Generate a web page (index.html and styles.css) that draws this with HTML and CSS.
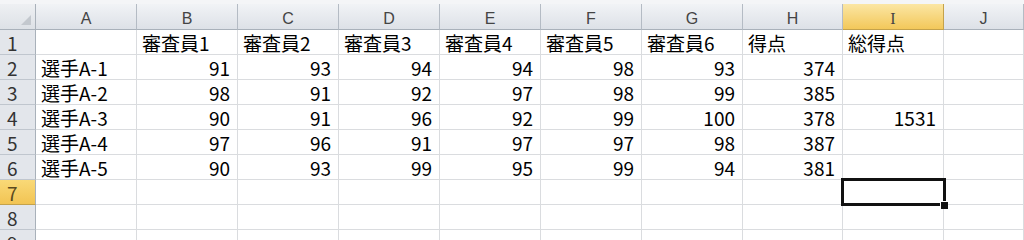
FILE: index.html
```html
<!DOCTYPE html>
<html lang="ja">
<head>
<meta charset="utf-8">
<title>Sheet</title>
<link rel="stylesheet" href="styles.css">
</head>
<body>
<div class="strip"></div>
<div class="sheet">
  <div class="corner"><span class="tri"></span></div>
  <div class="ch">A</div><div class="ch">B</div><div class="ch">C</div><div class="ch">D</div><div class="ch">E</div><div class="ch">F</div><div class="ch">G</div><div class="ch">H</div><div class="ch sel">I</div><div class="ch">J</div>

  <div class="rh">1</div>
  <div class="c"></div><div class="c">審査員1</div><div class="c">審査員2</div><div class="c">審査員3</div><div class="c">審査員4</div><div class="c">審査員5</div><div class="c">審査員6</div><div class="c">得点</div><div class="c">総得点</div><div class="c"></div>

  <div class="rh">2</div>
  <div class="c">選手A-1</div><div class="c n">91</div><div class="c n">93</div><div class="c n">94</div><div class="c n">94</div><div class="c n">98</div><div class="c n">93</div><div class="c n">374</div><div class="c"></div><div class="c"></div>

  <div class="rh">3</div>
  <div class="c">選手A-2</div><div class="c n">98</div><div class="c n">91</div><div class="c n">92</div><div class="c n">97</div><div class="c n">98</div><div class="c n">99</div><div class="c n">385</div><div class="c"></div><div class="c"></div>

  <div class="rh">4</div>
  <div class="c">選手A-3</div><div class="c n">90</div><div class="c n">91</div><div class="c n">96</div><div class="c n">92</div><div class="c n">99</div><div class="c n">100</div><div class="c n">378</div><div class="c n">1531</div><div class="c"></div>

  <div class="rh">5</div>
  <div class="c">選手A-4</div><div class="c n">97</div><div class="c n">96</div><div class="c n">91</div><div class="c n">97</div><div class="c n">97</div><div class="c n">98</div><div class="c n">387</div><div class="c"></div><div class="c"></div>

  <div class="rh">6</div>
  <div class="c">選手A-5</div><div class="c n">90</div><div class="c n">93</div><div class="c n">99</div><div class="c n">95</div><div class="c n">99</div><div class="c n">94</div><div class="c n">381</div><div class="c"></div><div class="c"></div>

  <div class="rh sel">7</div>
  <div class="c"></div><div class="c"></div><div class="c"></div><div class="c"></div><div class="c"></div><div class="c"></div><div class="c"></div><div class="c"></div><div class="c active"></div><div class="c"></div>

  <div class="rh">8</div>
  <div class="c"></div><div class="c"></div><div class="c"></div><div class="c"></div><div class="c"></div><div class="c"></div><div class="c"></div><div class="c"></div><div class="c"></div><div class="c"></div>

  <div class="rh">9</div>
  <div class="c"></div><div class="c"></div><div class="c"></div><div class="c"></div><div class="c"></div><div class="c"></div><div class="c"></div><div class="c"></div><div class="c"></div><div class="c"></div>
</div>
</body>
</html>
```

FILE: styles.css
```css
html, body {
  margin: 0;
  padding: 0;
  background: #ffffff;
  overflow: hidden;
  width: 1024px;
  height: 240px;
}

.strip {
  height: 4px;
  background: #f4f5f7;
}

.sheet {
  display: grid;
  grid-template-columns: 36px 101px 101px 101px 101px 101px 101px 101px 100px 101px 1fr;
  grid-template-rows: 26px repeat(9, 25px);
  font-family: "Noto Sans CJK JP", "Noto Sans", sans-serif;
  color: #000;
}

.corner {
  position: relative;
  background: linear-gradient(#eef0f3, #dde1e6);
  border-right: 1px solid #a9b1ba;
  border-bottom: 1px solid #a9b1ba;
}

.tri {
  position: absolute;
  right: 4px;
  bottom: 4px;
  width: 0;
  height: 0;
  border-left: 10px solid transparent;
  border-bottom: 10px solid #c3c8ce;
}

.ch {
  background: linear-gradient(#f1f3f6, #dde1e7);
  border-right: 1px solid #b4bbc4;
  border-bottom: 1px solid #a9b1ba;
  text-align: center;
  font-family: "Liberation Sans", sans-serif;
  font-size: 16px;
  line-height: 30px;
  color: #444;
}

.ch.sel {
  background: linear-gradient(#fbe6a4, #f3c85a);
  border-right-color: #c4a24b;
  border-bottom-color: #c4a24b;
  font-family: "Liberation Serif", serif;
}

.rh {
  background: #e3e6eb;
  border-right: 1px solid #a9b1ba;
  border-bottom: 1px solid #c0c6ce;
  font-size: 19px;
  line-height: 26px;
  padding-left: 7px;
  color: #333;
}

.rh.sel {
  background: linear-gradient(#f9d977, #f2c453);
  border-bottom-color: #c4a24b;
  color: #5a4a20;
}

.c {
  border-right: 1px solid #dadcdf;
  border-bottom: 1px solid #dadcdf;
  font-size: 19px;
  line-height: 26px;
  padding: 0 4px 0 5px;
  white-space: nowrap;
  overflow: hidden;
}

.c.n {
  text-align: right;
  padding-right: 7px;
}

.c.active {
  position: relative;
  overflow: visible;
}

.c.active::before {
  content: "";
  position: absolute;
  left: -2px;
  top: -2px;
  right: -3px;
  bottom: -2px;
  border: 3px solid #111;
}

.c.active::after {
  content: "";
  position: absolute;
  right: -5px;
  bottom: -5px;
  width: 7px;
  height: 7px;
  background: #111;
  border: 1px solid #fff;
  border-right: 0;
  border-bottom: 0;
}
```
